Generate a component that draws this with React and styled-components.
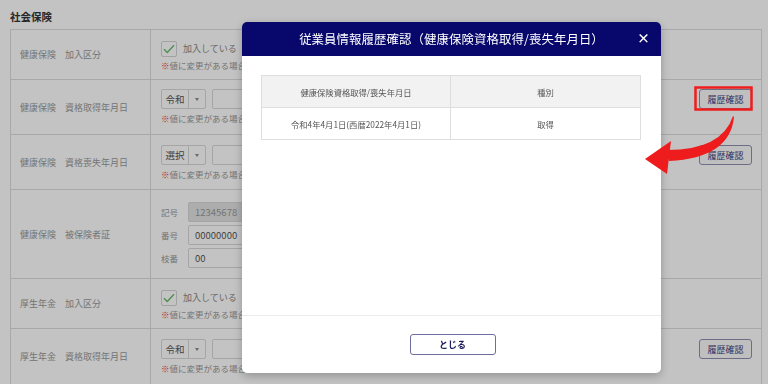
import React from "react";
import styled, { createGlobalStyle } from "styled-components";

const GlobalStyle = createGlobalStyle`
  html, body {
    margin: 0;
    padding: 0;
    background: #ffffff;
    font-family: "Noto Sans CJK JP", "Noto Sans", sans-serif;
    overflow: hidden;
  }
`;

const Page = styled.div`
  width: 768px;
  height: 384px;
  padding: 0 8px 0 10px;
  box-sizing: border-box;
`;

const SectionTitle = styled.div`
  height: 29px;
  line-height: 34px;
  font-size: 10.5px;
  font-weight: bold;
  color: #333;
`;

const Table = styled.div`
  width: 750px;
  border-top: 1px solid #dcdcdc;
  border-left: 1px solid #dcdcdc;
  border-right: 1px solid #dcdcdc;
`;

const Row = styled.div`
  display: grid;
  grid-template-columns: 140px 1fr;
  height: ${(p) => p.$h}px;
  border-bottom: 1px solid #dcdcdc;
  box-sizing: border-box;
`;

const Label = styled.div`
  display: flex;
  align-items: center;
  padding-left: 9px;
  font-size: 9px;
  color: #999;
  border-right: 1px solid #dcdcdc;
`;

const Value = styled.div`
  display: flex;
  justify-content: space-between;
  align-items: flex-start;
  padding: ${(p) => p.$pt || 9}px 9px 0 10px;
`;

const Stack = styled.div`
  display: flex;
  flex-direction: column;
  gap: ${(p) => p.$gap || 2}px;
`;

const Line = styled.div`
  display: flex;
  align-items: center;
  gap: 6px;
  height: ${(p) => p.$h || 20}px;
  font-size: 9px;
  color: #888;
`;

const CheckBox = styled.span`
  width: 14px;
  height: 14px;
  border: 1px solid #d4d4d4;
  border-radius: 2px;
  background: #fff;
  display: inline-flex;
  align-items: center;
  justify-content: center;
`;

const Note = styled.div`
  height: 14px;
  line-height: 14px;
  font-size: 8.5px;
  color: #999;
  white-space: nowrap;
  span {
    color: #ee3a3a;
  }
`;

const Select = styled.div`
  display: flex;
  width: 45px;
  height: 20px;
  border: 1px solid #d8d8d8;
  border-radius: 2px;
  box-sizing: border-box;
  font-size: 9.5px;
  color: #555;
`;

const SelectText = styled.div`
  flex: 1;
  display: flex;
  align-items: center;
  justify-content: center;
  border-right: 1px solid #d8d8d8;
`;

const SelectCaret = styled.div`
  width: 16px;
  display: flex;
  align-items: center;
  justify-content: center;
  &::after {
    content: "";
    border-left: 2.5px solid transparent;
    border-right: 2.5px solid transparent;
    border-top: 3px solid #888;
  }
`;

const Input = styled.div`
  width: ${(p) => p.$w || 60}px;
  height: 20px;
  border: 1px solid #d8d8d8;
  border-radius: 2px;
  box-sizing: border-box;
  background: ${(p) => (p.$disabled ? "#e2e2e2" : "#fff")};
  color: ${(p) => (p.$disabled ? "#999" : "#555")};
  font-size: 9.5px;
  display: flex;
  align-items: center;
  padding-left: 6px;
`;

const FieldLabel = styled.span`
  width: 21px;
  font-size: 8.5px;
  color: #999;
`;

const HistoryButton = styled.button`
  width: 53px;
  height: 20px;
  border: 1px solid #8f8fae;
  border-radius: 3px;
  background: #fafafa;
  color: #3c3c7c;
  font-family: inherit;
  font-size: 9px;
  padding: 0;
`;

const Overlay = styled.div`
  position: fixed;
  inset: 0;
  background: rgba(0, 0, 0, 0.235);
`;

const Modal = styled.div`
  position: fixed;
  left: 242px;
  top: 22px;
  width: 419px;
  height: 351px;
  background: #fff;
  border-radius: 5px;
  overflow: hidden;
  display: flex;
  flex-direction: column;
  box-shadow: 0 3px 10px rgba(0, 0, 0, 0.25);
`;

const ModalHeader = styled.div`
  height: 34px;
  background: #08086c;
  color: #fff;
  display: flex;
  align-items: center;
  justify-content: center;
  position: relative;
  font-size: 12.4px;
  letter-spacing: 0.1px;
`;

const Close = styled.span`
  position: absolute;
  right: 11px;
  top: 9px;
  font-size: 13px;
  line-height: 14px;
  font-weight: bold;
`;

const ModalBody = styled.div`
  flex: 1;
  padding: 19px 20px 0 19px;
`;

const HistoryTable = styled.div`
  display: grid;
  grid-template-columns: 189px 1fr;
  border: 1px solid #dedede;
`;

const Cell = styled.div`
  height: 31px;
  display: flex;
  align-items: center;
  justify-content: center;
  font-size: 8.3px;
  color: #555;
  background: ${(p) => (p.$head ? "#f2f2f2" : "#fff")};
  border-right: ${(p) => (p.$first ? "1px solid #dedede" : "none")};
  border-bottom: ${(p) => (p.$head ? "1px solid #dedede" : "none")};
`;

const ModalFooter = styled.div`
  height: 57px;
  border-top: 1px solid #ececec;
  display: flex;
  align-items: center;
  justify-content: center;
  padding-left: 2px;
`;

const CloseButton = styled.button`
  width: 86px;
  height: 21px;
  border: 1px solid #6d6d9e;
  border-radius: 3px;
  background: #fff;
  color: #1c1c5c;
  font-family: inherit;
  font-size: 9px;
  font-weight: bold;
  padding: 0;
`;

const Annotation = styled.svg`
  position: fixed;
  left: 0;
  top: 0;
  pointer-events: none;
`;

const Check = () => (
  <svg width="12" height="10" viewBox="0 0 12 10">
    <path d="M1 5.2 L4.3 8.5 L11 1.2" fill="none" stroke="#66b866" strokeWidth="1.3" />
  </svg>
);

const NoteLine = () => (
  <Note>
    <span>※</span>値に変更がある場合は、
  </Note>
);

const EraSelect = ({ text }) => (
  <Select>
    <SelectText>{text}</SelectText>
    <SelectCaret />
  </Select>
);

export default function App() {
  return (
    <>
      <GlobalStyle />
      <Page>
        <SectionTitle>社会保険</SectionTitle>
        <Table>
          <Row $h={50}>
            <Label>健康保険　加入区分</Label>
            <Value $pt={10}>
              <Stack $gap={1}>
                <Line $h={17}>
                  <CheckBox>
                    <Check />
                  </CheckBox>
                  加入している
                </Line>
                <NoteLine />
              </Stack>
            </Value>
          </Row>
          <Row $h={55}>
            <Label>健康保険　資格取得年月日</Label>
            <Value>
              <Stack>
                <Line>
                  <EraSelect text="令和" />
                  <Input $w={80} />
                </Line>
                <NoteLine />
              </Stack>
              <HistoryButton>履歴確認</HistoryButton>
            </Value>
          </Row>
          <Row $h={55}>
            <Label>健康保険　資格喪失年月日</Label>
            <Value $pt={10}>
              <Stack>
                <Line>
                  <EraSelect text="選択" />
                  <Input $w={80} />
                </Line>
                <NoteLine />
              </Stack>
              <HistoryButton>履歴確認</HistoryButton>
            </Value>
          </Row>
          <Row $h={89}>
            <Label>健康保険　被保険者証</Label>
            <Value $pt={12}>
              <Stack $gap={3}>
                <Line>
                  <FieldLabel>記号</FieldLabel>
                  <Input $w={80} $disabled>12345678</Input>
                </Line>
                <Line>
                  <FieldLabel>番号</FieldLabel>
                  <Input $w={80}>00000000</Input>
                </Line>
                <Line>
                  <FieldLabel>枝番</FieldLabel>
                  <Input $w={80}>00</Input>
                </Line>
              </Stack>
            </Value>
          </Row>
          <Row $h={50}>
            <Label>厚生年金　加入区分</Label>
            <Value $pt={10}>
              <Stack $gap={1}>
                <Line $h={17}>
                  <CheckBox>
                    <Check />
                  </CheckBox>
                  加入している
                </Line>
                <NoteLine />
              </Stack>
            </Value>
          </Row>
          <Row $h={56}>
            <Label>厚生年金　資格取得年月日</Label>
            <Value $pt={10}>
              <Stack>
                <Line>
                  <EraSelect text="令和" />
                  <Input $w={80} />
                </Line>
                <NoteLine />
              </Stack>
              <HistoryButton>履歴確認</HistoryButton>
            </Value>
          </Row>
        </Table>
      </Page>
      <Overlay />
      <Modal>
        <ModalHeader>
          従業員情報履歴確認（健康保険資格取得/喪失年月日）
          <Close>×</Close>
        </ModalHeader>
        <ModalBody>
          <HistoryTable>
            <Cell $head $first>健康保険資格取得/喪失年月日</Cell>
            <Cell $head>種別</Cell>
            <Cell $first>令和4年4月1日(西暦2022年4月1日)</Cell>
            <Cell>取得</Cell>
          </HistoryTable>
        </ModalBody>
        <ModalFooter>
          <CloseButton>とじる</CloseButton>
        </ModalFooter>
      </Modal>
      <Annotation width="768" height="384" viewBox="0 0 768 384">
        <rect x="695.5" y="87.5" width="56" height="22" fill="none" stroke="#ee1c1c" strokeWidth="2.5" />
        <path
          d="M733 116 Q722 150 667 150 L669 161 Q730 158 734 117 Z"
          fill="#ee1c1c"
        />
        <path d="M645 159 L671 141 L667 174 Z" fill="#ee1c1c" />
      </Annotation>
    </>
  );
}
